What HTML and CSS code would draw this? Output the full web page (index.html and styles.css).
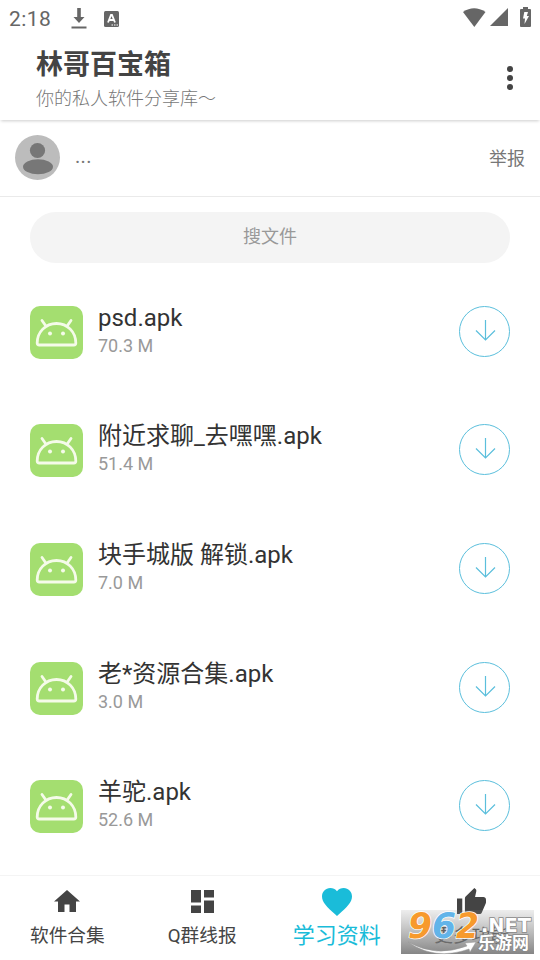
FILE: index.html
```html
<!DOCTYPE html>
<html lang="zh-CN">
<head>
    <meta charset="UTF-8">
    <meta name="viewport" content="width=device-width, initial-scale=1.0">
    <title>林哥百宝箱</title>
    <link rel="stylesheet" href="styles.css">
</head>
<body>
    <!-- Shared icons -->
    <svg class="icon-defs" width="0" height="0">
        <symbol id="android" viewBox="0 0 53 53">
            <path d="M7.200 37C7.200 26 15.500 17.500 26.500 17.500S45.800 26 45.800 37Q45.800 39 43.800 39H9.200Q7.200 39 7.200 37ZM15.500 19.500L12 14.500M37.500 19.500L41 14.500" fill="none" stroke="#f5fbe9" stroke-width="2.800" stroke-linecap="round" stroke-linejoin="round"/>
            <circle cx="20" cy="27.500" r="2" fill="#f5fbe9"/>
            <circle cx="33" cy="27.500" r="2" fill="#f5fbe9"/>
        </symbol>
        <symbol id="arrow" viewBox="0 0 51 51">
            <circle cx="25.500" cy="25.500" r="25" fill="none" stroke="#5bbfdc"/>
            <path d="M26.500 14V34M17 24.500L26.500 34L36 24.500" fill="none" stroke="#5bbfdc" stroke-width="1.200"/>
        </symbol>
    </svg>

    <div class="status-bar">
        <span class="time">2:18</span>
        <svg class="status-download" width="16" height="21" viewBox="0 0 16 21">
            <path d="M6.200 0H9.800V9H13.500L8 15L2.500 9H6.200ZM.5 18.500H15.500V20.500H.5Z" fill="#666"/>
        </svg>
        <svg class="status-app" width="15" height="16" viewBox="0 0 15 16">
            <rect width="15" height="16" rx="1.500" fill="#666"/>
            <path d="M4 11.500L7 4H8L11 11.500M5.500 9H9.500" fill="none" stroke="#fff" stroke-width="1.800"/>
            <path d="M7.500 14H9M10 14H11.500M12.500 14H14" stroke="#fff" stroke-width="1.200"/>
        </svg>
        <div class="status-right">
            <svg width="23" height="19" viewBox="0 0 23 19"><path d="M0 4Q11-3.500 22.500 4L11.300 19Z" fill="#666"/></svg>
            <svg width="18" height="18" viewBox="0 0 18 18"><path d="M0 18L18 0V18Z" fill="#666"/></svg>
            <svg class="battery" width="11" height="20" viewBox="0 0 11 20">
                <path d="M3 0H8V2H10Q11 2 11 3V19Q11 20 10 20H1Q0 20 0 19V3Q0 2 1 2H3Z" fill="#666"/>
                <path d="M4.300 5H8L6.800 9H9L4.500 17L5 11.500H3Z" fill="#fff"/>
            </svg>
        </div>
    </div>

    <header class="header">
        <div>
            <h1>林哥百宝箱</h1>
            <p>你的私人软件分享库～</p>
        </div>
        <svg width="6" height="24" viewBox="0 0 6 24" fill="#444">
            <circle cx="3" cy="3" r="3"/><circle cx="3" cy="12" r="3"/><circle cx="3" cy="21" r="3"/>
        </svg>
    </header>

    <div class="user-row">
        <svg class="avatar" width="45" height="45" viewBox="0 0 45 45">
            <circle cx="22.500" cy="22.500" r="22.500" fill="#bcbcbc"/>
            <circle cx="22.500" cy="15.500" r="7.600" fill="#777"/>
            <ellipse cx="23" cy="31.700" rx="15" ry="7.500" fill="#777"/>
        </svg>
        <span class="user-name">...</span>
        <span class="report">举报</span>
    </div>

    <div class="search">搜文件</div>

    <main class="file-list">
        <div class="file">
            <svg class="file-icon"><use href="#android"/></svg>
            <div class="file-info"><h2>psd.apk</h2><p>70.3 M</p></div>
            <svg class="download"><use href="#arrow"/></svg>
        </div>
        <div class="file">
            <svg class="file-icon"><use href="#android"/></svg>
            <div class="file-info"><h2>附近求聊_去嘿嘿.apk</h2><p>51.4 M</p></div>
            <svg class="download"><use href="#arrow"/></svg>
        </div>
        <div class="file">
            <svg class="file-icon"><use href="#android"/></svg>
            <div class="file-info"><h2>块手城版 解锁.apk</h2><p>7.0 M</p></div>
            <svg class="download"><use href="#arrow"/></svg>
        </div>
        <div class="file">
            <svg class="file-icon"><use href="#android"/></svg>
            <div class="file-info"><h2>老*资源合集.apk</h2><p>3.0 M</p></div>
            <svg class="download"><use href="#arrow"/></svg>
        </div>
        <div class="file">
            <svg class="file-icon"><use href="#android"/></svg>
            <div class="file-info"><h2>羊驼.apk</h2><p>52.6 M</p></div>
            <svg class="download"><use href="#arrow"/></svg>
        </div>
    </main>

    <nav class="tab-bar">
        <a class="tab">
            <svg class="small-icon" width="26" height="22" viewBox="0 0 26 22"><path d="M13 0L26 11.500H22V22H15.500V14.500H10.500V22H4V11.500H0Z" fill="#444"/></svg>
            <span>软件合集</span>
        </a>
        <a class="tab">
            <svg class="small-icon" width="23" height="23" viewBox="0 0 23 23"><path d="M0 0H10V12.500H0ZM13 0H23V7.500H13ZM0 15.500H10V23H0ZM13 10.500H23V23H13Z" fill="#444"/></svg>
            <span>Q群线报</span>
        </a>
        <a class="tab active">
            <svg width="30" height="28" viewBox="2 3 20 18.350" preserveAspectRatio="none"><path d="M12 21.350l-1.450-1.320C5.400 15.360 2 12.280 2 8.500 2 5.420 4.420 3 7.500 3c1.740 0 3.410.81 4.500 2.090C13.090 3.810 14.760 3 16.500 3 19.580 3 22 5.420 22 8.500c0 3.780-3.400 6.860-8.550 11.540L12 21.350z" fill="#1abcd9"/></svg>
            <span>学习资料</span>
        </a>
        <a class="tab">
            <svg width="29" height="26" viewBox="1 1 22 20" preserveAspectRatio="none"><path d="M1 21h4V9H1v12zm22-11c0-1.100-.9-2-2-2h-6.310l.95-4.570.03-.32c0-.41-.17-.79-.44-1.060L14.170 1 7.590 7.590C7.220 7.950 7 8.450 7 9v10c0 1.100.9 2 2 2h9c.83 0 1.540-.5 1.840-1.220l3.020-7.050c.09-.23.14-.47.14-.73v-2z" fill="#444"/></svg>
            <span>更多功能</span>
        </a>

        <!-- Site badge over the last tab -->
        <svg class="watermark" width="133" height="44" viewBox="0 0 133 44">
            <defs>
                <linearGradient id="shade" x2="0" y2="1">
                    <stop offset="0" stop-color="#888" stop-opacity=".15"/>
                    <stop offset="1" stop-color="#787878" stop-opacity=".9"/>
                </linearGradient>
            </defs>
            <rect width="133" height="44" fill="url(#shade)"/>
            <path d="M7 32Q35 48 66 36L64 33L75 32L69 42L68 39Q34 51 7 32Z" fill="#fff" stroke="#999" stroke-width=".5"/>
            <g class="digits">
                <text x="7" y="28" textLength="24" lengthAdjust="spacingAndGlyphs" fill="#f79a2d">9</text>
                <text x="31" y="28" textLength="24" lengthAdjust="spacingAndGlyphs" fill="#62b4e9">6</text>
                <text x="55" y="28" textLength="23" lengthAdjust="spacingAndGlyphs" fill="#f79a2d">2</text>
            </g>
            <text class="domain" x="80" y="22" textLength="50" lengthAdjust="spacingAndGlyphs">.NET</text>
            <text class="site" x="77" y="39" textLength="51">乐游网</text>
        </svg>
    </nav>
</body>
</html>
```
FILE: styles.css
```css
* {
    margin: 0;
    padding: 0;
    box-sizing: border-box;
}

body {
    width: 540px;
    height: 960px;
    overflow: hidden;
    display: flex;
    flex-direction: column;
    background: #fff;
    color: #333;
    font-family: Roboto, 'Noto Sans CJK SC', sans-serif;
}

svg {
    display: block;
    flex-shrink: 0;
}

.icon-defs {
    position: absolute;
}

.status-bar {
    height: 38px;
    flex-shrink: 0;
    display: flex;
    align-items: center;
    padding: 0 9px 0 9px;
    color: #666;
}

.time {
    width: 62px;
    font-size: 21px;
    letter-spacing: 0.4px;
}

.status-download {
    margin-top: -1px;
}

.status-app {
    margin-left: 17px;
    margin-top: -1px;
}

.status-right {
    display: flex;
    align-items: center;
    gap: 4px;
    margin-left: auto;
    margin-top: -4px;
}

.battery {
    margin-left: 8px;
}

.header {
    height: 82px;
    flex-shrink: 0;
    display: flex;
    justify-content: space-between;
    padding: 9px 27px 0 36px;
    box-shadow: 0 2px 3px -1px rgba(0, 0, 0, 0.2);
}

.header svg {
    margin-top: 19px;
}

.header h1 {
    font-size: 27px;
    line-height: 36px;
    font-weight: 700;
    color: #444;
}

.header p {
    margin-top: 3px;
    font-size: 18px;
    line-height: 26px;
    font-weight: 300;
    color: #777;
}

.user-row {
    height: 77px;
    flex-shrink: 0;
    display: flex;
    align-items: center;
    padding: 0 15px 2px;
    border-bottom: 1px solid #eaeaea;
    color: #777;
    font-size: 18px;
}

.user-name {
    margin-left: 15px;
    margin-top: -2px;
    font-size: 20px;
    letter-spacing: 0.3px;
}

.report {
    margin-left: auto;
    margin-top: -1px;
}

.search {
    height: 51px;
    flex-shrink: 0;
    margin: 15px 30px 10px;
    border-radius: 26px;
    background: #f4f4f4;
    color: #999;
    font-size: 18px;
    line-height: 49px;
    text-align: center;
}

.file-list {
    height: 602px;
    flex-shrink: 0;
}

.file {
    height: 118.6px;
    display: flex;
    align-items: center;
    padding: 0 30px;
}

.file-icon {
    width: 53px;
    height: 53px;
    border-radius: 10px;
    background: #a4de70;
}

.file-info {
    flex: 1;
    margin-left: 15px;
    margin-top: -4px;
}

.file h2 {
    font-size: 24px;
    line-height: 31px;
    font-weight: 400;
    color: #333;
}

.file p {
    font-size: 18px;
    line-height: 24px;
    color: #999;
}

.download {
    width: 51px;
    height: 51px;
    margin-top: -2px;
}

.tab-bar {
    position: relative;
    height: 85px;
    flex-shrink: 0;
    display: grid;
    grid-template-columns: repeat(4, 1fr);
    padding-right: 1px;
    border-top: 1px solid #f4f4f4;
    background: #fff;
}

.tab {
    display: flex;
    flex-direction: column;
    align-items: center;
    padding-top: 12px;
    color: #444;
    font-size: 18.7px;
}

.small-icon {
    margin-top: 2px;
}

.tab span {
    margin-top: auto;
    margin-bottom: 10px;
    line-height: 28px;
}

.tab.active {
    color: #1abcd9;
    font-size: 22px;
}

.watermark {
    position: absolute;
    left: 401px;
    top: 34px;
    overflow: visible;
}

.digits {
    font: italic bold 35px 'DejaVu Sans', sans-serif;
    stroke: #fff;
    stroke-width: 1.5px;
    paint-order: stroke;
}

.domain,
.site {
    font: bold 19px 'DejaVu Sans', sans-serif;
    fill: #fff;
    stroke: #888;
    stroke-width: 1.5px;
    paint-order: stroke;
}

.site {
    font: bold 17px 'Noto Sans CJK SC', sans-serif;
}
```
